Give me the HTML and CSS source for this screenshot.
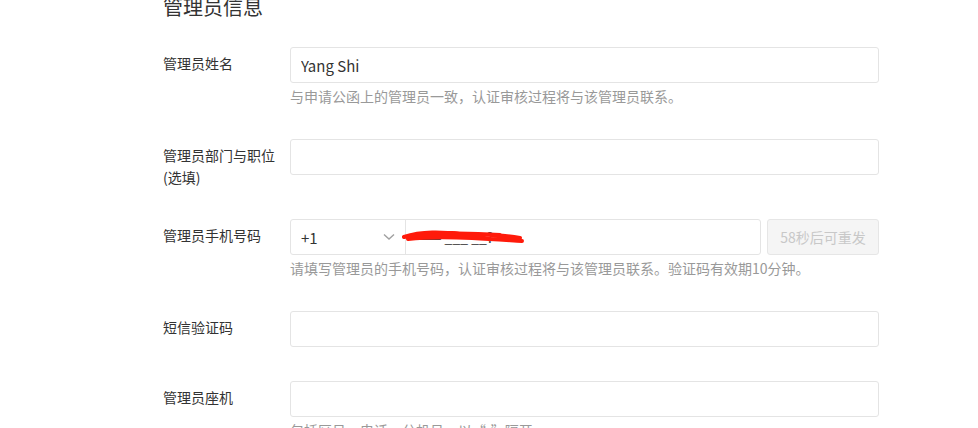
FILE: index.html
```html
<!DOCTYPE html>
<html lang="zh-CN">
<head>
    <meta charset="UTF-8">
    <meta name="viewport" content="width=device-width, initial-scale=1.0">
    <title>管理员信息</title>
    <link rel="stylesheet" href="styles.css">
</head>
<body>
    <div class="section">
        <h2 class="section-title">管理员信息</h2>

        <div class="form-row">
            <label class="form-label" for="name">管理员姓名</label>
            <div class="form-field">
                <input class="text-input" type="text" id="name" value="Yang Shi">
                <div class="help">与申请公函上的管理员一致，认证审核过程将与该管理员联系。</div>
            </div>
        </div>

        <div class="form-row tall">
            <label class="form-label" for="dept">管理员部门与职位<br>(选填)</label>
            <div class="form-field">
                <input class="text-input" type="text" id="dept">
            </div>
        </div>

        <div class="form-row">
            <label class="form-label" for="phone">管理员手机号码</label>
            <div class="form-field">
                <div class="phone-line">
                    <div class="phone-group">
                        <div class="area-select">
                            <span>+1</span>
                            <svg class="chevron" width="12" height="8" viewBox="0 0 12 8">
                                <path d="M1 1.5 L6 6 L11 1.5" fill="none" stroke="#a0a0a0" stroke-width="1.4"/>
                            </svg>
                        </div>
                        <div class="phone-wrap">
                            <input class="phone-input" type="text" id="phone">
                            <span class="phone-digits">—— ___ __?</span>
                            <!-- redacted number -->
                            <svg class="scribble" width="124" height="18" viewBox="0 0 124 18">
                                <path d="M2 9 C20 3 40 4 60 6 C80 7 95 6 118 10 M6 11 C30 8 50 9 70 10 C90 11 104 12 120 13 M14 7 C40 5 70 5 98 7" fill="none" stroke="#ff1a0a" stroke-width="4" stroke-linecap="round"/>
                            </svg>
                        </div>
                    </div>
                    <button class="resend-btn" disabled>58秒后可重发</button>
                </div>
                <div class="help">请填写管理员的手机号码，认证审核过程将与该管理员联系。验证码有效期10分钟。</div>
            </div>
        </div>

        <div class="form-row">
            <label class="form-label" for="code">短信验证码</label>
            <div class="form-field">
                <input class="text-input" type="text" id="code">
            </div>
        </div>

        <div class="form-row">
            <label class="form-label" for="tel">管理员座机</label>
            <div class="form-field">
                <input class="text-input" type="text" id="tel">
                <div class="help">包括区号、电话、分机号，以“-”隔开</div>
            </div>
        </div>
    </div>
</body>
</html>
```

FILE: styles.css
```css
html, body {
    overflow: hidden;
}
body {
    margin: 0;
    padding: 0;
    background: #ffffff;
    color: #333333;
    font-family: "Noto Sans CJK SC", "Noto Sans", sans-serif;
    font-size: 14px;
}
.section {
    padding-left: 163px;
}
.section-title {
    margin: -7px 0 26px;
    font-size: 20px;
    line-height: 28px;
    font-weight: normal;
    color: #333333;
}
.form-row {
    display: flex;
    align-items: flex-start;
    margin-bottom: 34px;
}
.form-row.tall {
    margin-bottom: 31px;
}
.form-label {
    width: 127px;
    flex-shrink: 0;
    padding-top: 5px;
    line-height: 22px;
    color: #333333;
}
.form-field {
    width: 589px;
}
.text-input {
    display: block;
    box-sizing: border-box;
    width: 100%;
    height: 36px;
    padding: 0 10px;
    border: 1px solid #e4e4e4;
    border-radius: 3px;
    font-family: inherit;
    font-size: 15px;
    color: #333333;
    outline: none;
}
.help {
    margin-top: 4px;
    line-height: 18px;
    color: #999999;
    font-size: 14px;
    white-space: nowrap;
}
.phone-line {
    display: flex;
    gap: 6px;
}
.phone-group {
    display: flex;
    flex: 1;
    height: 36px;
    box-sizing: border-box;
    border: 1px solid #e4e4e4;
    border-radius: 3px;
}
.area-select {
    width: 115px;
    display: flex;
    align-items: center;
    justify-content: space-between;
    box-sizing: border-box;
    padding: 0 10px 0 10px;
    border-right: 1px solid #e4e4e4;
    font-size: 15px;
    color: #333333;
}
.phone-wrap {
    position: relative;
    flex: 1;
}
.phone-input {
    width: 100%;
    height: 100%;
    box-sizing: border-box;
    border: none;
    background: transparent;
    outline: none;
}
.phone-digits {
    position: absolute;
    left: 12px;
    top: 7px;
    color: #444444;
    font-size: 14px;
    line-height: 20px;
}
.scribble {
    position: absolute;
    left: -4px;
    top: 8px;
}
.resend-btn {
    width: 112px;
    height: 36px;
    border: 1px solid #e6e6e6;
    border-radius: 3px;
    background: #f5f5f5;
    color: #c8c8c8;
    font-family: inherit;
    font-size: 14px;
    padding: 0;
}
```
